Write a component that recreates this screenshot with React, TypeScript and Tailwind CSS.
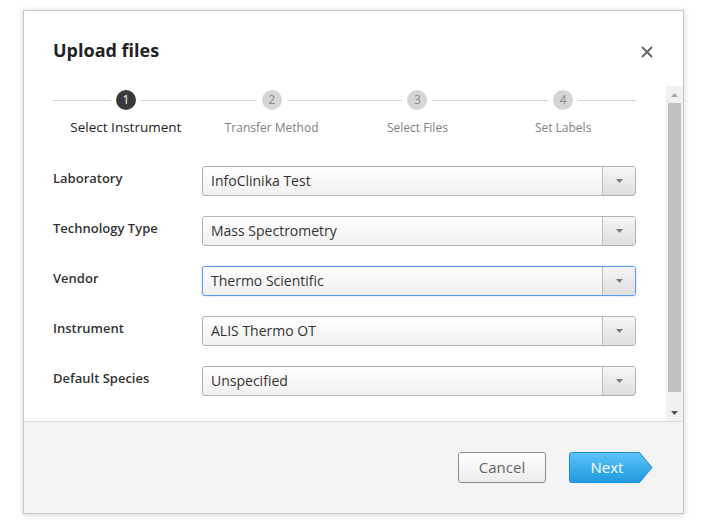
const STEPS = [
  { n: 1, label: 'Select Instrument', active: true },
  { n: 2, label: 'Transfer Method', active: false },
  { n: 3, label: 'Select Files', active: false },
  { n: 4, label: 'Set Labels', active: false },
]

const FIELDS = [
  { label: 'Laboratory', value: 'InfoClinika Test' },
  { label: 'Technology Type', value: 'Mass Spectrometry' },
  { label: 'Vendor', value: 'Thermo Scientific', focused: true },
  { label: 'Instrument', value: 'ALIS Thermo OT' },
  { label: 'Default Species', value: 'Unspecified' },
]

function Select({ value, focused }: { value: string; focused?: boolean }) {
  return (
    <div
      className={`flex h-[30px] flex-1 rounded-[3px] border bg-gradient-to-b from-white to-[#f0f0f0] ${
        focused ? 'border-[#5b9cf2] shadow-[0_0_2px_rgba(80,150,240,0.5)]' : 'border-[#b3b3b3]'
      }`}
    >
      <div className="flex flex-1 items-center pl-[8px] text-[14px] leading-[20px] text-[#333]">{value}</div>
      <div className="flex w-[33px] items-center justify-center rounded-r-[2px] border-l border-[#bdbdbd] bg-gradient-to-b from-[#f6f6f6] to-[#dedede]">
        <svg width="7" height="4" viewBox="0 0 7 4">
          <path d="M0 0h7L3.5 4z" fill="#7a7a7a" />
        </svg>
      </div>
    </div>
  )
}

function Stepper() {
  return (
    <div className="relative grid grid-cols-4">
      <div className="absolute left-0 right-0 top-[14px] h-px bg-[#d6d6d6]" />
      {STEPS.map((s) => (
        <div key={s.n} className="relative flex flex-col items-center">
          <div className="rounded-full bg-white px-[5px] py-[4px]">
            <div
              className={`flex h-[20px] w-[20px] items-center justify-center rounded-full text-[12px] ${
                s.active ? 'bg-[#3a3a3a] text-white' : 'bg-[#d5d5d5] text-[#888]'
              }`}
            >
              {s.n}
            </div>
          </div>
          <div
            className={`leading-[18px] ${
              s.active ? 'mt-[4px] text-[13.5px] text-[#222]' : 'mt-[5px] text-[12px] text-[#808080]'
            }`}
          >
            {s.label}
          </div>
        </div>
      ))}
    </div>
  )
}

function Scrollbar() {
  return (
    <div className="flex w-[17px] flex-col bg-[#f1f1f1]">
      <div className="flex h-[17px] items-center justify-center">
        <svg width="7" height="4" viewBox="0 0 7 4">
          <path d="M3.5 0L7 4H0z" fill="#a3a3a3" />
        </svg>
      </div>
      <div className="mx-[2px] h-[289px] bg-[#c1c1c1]" />
      <div className="flex-1" />
      <div className="flex h-[17px] items-center justify-center">
        <svg width="7" height="4" viewBox="0 0 7 4">
          <path d="M0 0h7L3.5 4z" fill="#505050" />
        </svg>
      </div>
    </div>
  )
}

export default function App() {
  return (
    <div className="h-[522px] w-[704px] bg-white pl-[23px] pt-[10px]" style={{ fontFamily: '"Open Sans", "Noto Sans", sans-serif' }}>
      <div className="flex h-[504px] w-[661px] flex-col border border-[#c8c8c8] bg-white shadow-[0_1px_6px_rgba(0,0,0,0.18)]">
        {/* header */}
        <div className="flex h-[75px] items-start justify-between pl-[29px] pr-[30px] pt-[26px]">
          <h2 className="text-[18px] font-bold leading-[26px] text-[#222]">Upload files</h2>
          <svg width="12" height="12" viewBox="0 0 12 12" className="mt-[9px]">
            <path d="M1 1l10 10M11 1L1 11" stroke="#666" strokeWidth="2" />
          </svg>
        </div>

        {/* body */}
        <div className="flex h-[335px]">
          <div className="flex-1 pl-[29px] pr-[30px]">
            <Stepper />
            <div className="mt-[29px] flex flex-col gap-[20px]">
              {FIELDS.map((f) => (
                <div key={f.label} className="flex items-start">
                  <div className="w-[149px] pt-[3px] text-[13px] font-semibold leading-[18px] text-[#333]">{f.label}</div>
                  <Select value={f.value} focused={f.focused} />
                </div>
              ))}
            </div>
          </div>
          <Scrollbar />
        </div>

        {/* footer */}
        <div className="flex flex-1 items-start justify-end gap-[23px] border-t border-[#dcdcdc] bg-[#f4f4f4] pr-[30px] pt-[30px]">
          <button className="h-[31px] w-[88px] rounded-[3px] border border-[#8a8a8a] bg-gradient-to-b from-white to-[#ececec] text-[15px] text-[#666]">
            Cancel
          </button>
          <div className="relative flex h-[31px] w-[84px]">
            <svg width="84" height="31" viewBox="0 0 84 31" className="absolute inset-0">
              <defs>
                <linearGradient id="nextg" x1="0" y1="0" x2="0" y2="1">
                  <stop offset="0" stopColor="#5cc3f7" />
                  <stop offset="1" stopColor="#1f9ae0" />
                </linearGradient>
              </defs>
              <path d="M2.5 0.5H70.5L83 15.5L70.5 30.5H2.5A2 2 0 0 1 0.5 28.5V2.5A2 2 0 0 1 2.5 0.5Z" fill="url(#nextg)" stroke="#1c8fd6" />
            </svg>
            <span className="relative flex w-[76px] items-center justify-center text-[15px] text-white">Next</span>
          </div>
        </div>
      </div>
    </div>
  )
}
